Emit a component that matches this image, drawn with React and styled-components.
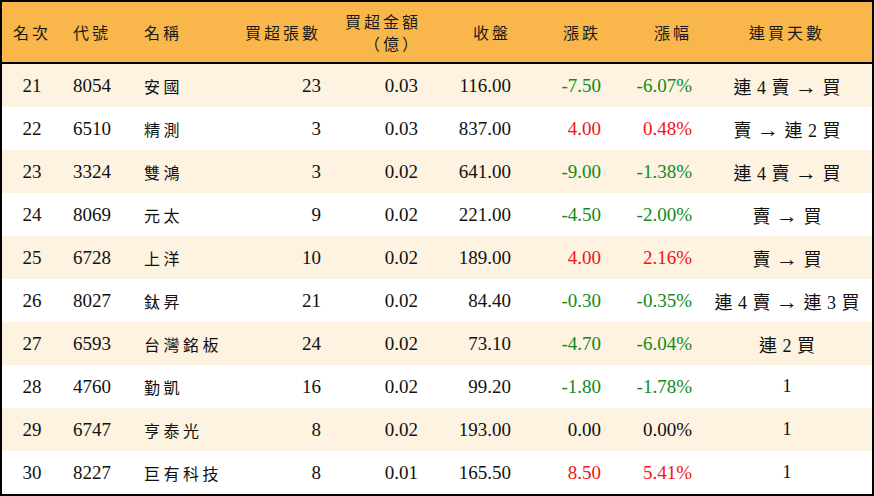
import React from 'react';
import styled, { createGlobalStyle } from 'styled-components';

const GlobalStyle = createGlobalStyle`
  html, body {
    margin: 0;
    padding: 0;
    background: #ffffff;
  }
`;

const COLS = '60px 70px 98px 101px 97px 93px 90px 91px 170px';

const Table = styled.div`
  box-sizing: border-box;
  width: 874px;
  height: 496px;
  border: 2px solid #000;
  background: #fff;
  font-family: 'Liberation Serif', 'Noto Sans CJK TC', serif;
  color: #111;
  display: flex;
  flex-direction: column;
`;

const HeadRow = styled.div`
  display: grid;
  grid-template-columns: ${COLS};
  height: 60px;
  background: #f9b74b;
  border-bottom: 2px solid #000;
`;

const HeadCell = styled.div`
  display: flex;
  flex-direction: column;
  justify-content: center;
  align-items: ${(p) => (p.$align === 'right' ? 'flex-end' : p.$align === 'center' ? 'center' : 'flex-start')};
  text-align: ${(p) => p.$align || 'left'};
  padding: ${(p) => (p.$align === 'right' ? '0 10px 0 0' : p.$align === 'center' ? '0' : `0 0 0 ${p.$indent || 11}px`)};
  font-family: 'Noto Sans CJK TC', sans-serif;
  font-size: 16px;
  line-height: 22px;
  letter-spacing: 3px;
  color: #1a1a1a;
  white-space: nowrap;
`;

const HeadLine = styled.span`
  display: block;
  margin-right: -3px;
`;

const Body = styled.div`
  display: flex;
  flex-direction: column;
  flex: 1;
`;

const Row = styled.div`
  display: grid;
  grid-template-columns: ${COLS};
  height: 43px;
  align-items: center;
  background: ${(p) => (p.$stripe ? '#fdf3e0' : '#ffffff')};
`;

const Cell = styled.div`
  font-size: 19px;
  white-space: nowrap;
  text-align: ${(p) => p.$align || 'left'};
  padding: ${(p) => (p.$align === 'right' ? '0 10px 0 0' : p.$align === 'center' ? '0' : '0 0 0 11px')};
  color: ${(p) => (p.$tone === 'up' ? '#f01414' : p.$tone === 'down' ? '#108a1a' : '#111')};
`;

const NameCell = styled(Cell)`
  font-family: 'Noto Sans CJK TC', sans-serif;
  font-size: 16px;
  letter-spacing: 3.5px;
  padding-left: 12px;
`;

const Streak = styled(Cell)`
  font-size: 18px;
  word-spacing: 1px;
`;

const Arrow = styled.span`
  font-family: 'Liberation Serif', serif;
  font-size: 22px;
  line-height: 18px;
`;

const rows = [
  ['21', '8054', '安國', '23', '0.03', '116.00', '-7.50', '-6.07%', '連 4 賣 → 買'],
  ['22', '6510', '精測', '3', '0.03', '837.00', '4.00', '0.48%', '賣 → 連 2 買'],
  ['23', '3324', '雙鴻', '3', '0.02', '641.00', '-9.00', '-1.38%', '連 4 賣 → 買'],
  ['24', '8069', '元太', '9', '0.02', '221.00', '-4.50', '-2.00%', '賣 → 買'],
  ['25', '6728', '上洋', '10', '0.02', '189.00', '4.00', '2.16%', '賣 → 買'],
  ['26', '8027', '鈦昇', '21', '0.02', '84.40', '-0.30', '-0.35%', '連 4 賣 → 連 3 買'],
  ['27', '6593', '台灣銘板', '24', '0.02', '73.10', '-4.70', '-6.04%', '連 2 買'],
  ['28', '4760', '勤凱', '16', '0.02', '99.20', '-1.80', '-1.78%', '1'],
  ['29', '6747', '亨泰光', '8', '0.02', '193.00', '0.00', '0.00%', '1'],
  ['30', '8227', '巨有科技', '8', '0.01', '165.50', '8.50', '5.41%', '1'],
];

const toneOf = (v) => (v.startsWith('-') ? 'down' : parseFloat(v) > 0 ? 'up' : undefined);

function StreakText({ text }) {
  const parts = text.split(' → ');
  if (parts.length === 1) return text;
  return (
    <>
      {parts[0]} <Arrow>→</Arrow> {parts[1]}
    </>
  );
}

export default function App() {
  return (
    <>
      <GlobalStyle />
      <Table>
        <HeadRow>
          <HeadCell $align="center">名次</HeadCell>
          <HeadCell>代號</HeadCell>
          <HeadCell $indent={12}>名稱</HeadCell>
          <HeadCell $align="right">買超張數</HeadCell>
          <HeadCell $align="right">
            <HeadLine>買超金額</HeadLine>
            <HeadLine>（億）</HeadLine>
          </HeadCell>
          <HeadCell $align="right">收盤</HeadCell>
          <HeadCell $align="right">漲跌</HeadCell>
          <HeadCell $align="right">漲幅</HeadCell>
          <HeadCell $align="center">連買天數</HeadCell>
        </HeadRow>
        <Body>
          {rows.map((r, i) => (
            <Row key={r[0]} $stripe={i % 2 === 0}>
              <Cell $align="center">{r[0]}</Cell>
              <Cell>{r[1]}</Cell>
              <NameCell>{r[2]}</NameCell>
              <Cell $align="right">{r[3]}</Cell>
              <Cell $align="right">{r[4]}</Cell>
              <Cell $align="right">{r[5]}</Cell>
              <Cell $align="right" $tone={toneOf(r[6])}>{r[6]}</Cell>
              <Cell $align="right" $tone={toneOf(r[7])}>{r[7]}</Cell>
              <Streak $align="center">
                <StreakText text={r[8]} />
              </Streak>
            </Row>
          ))}
        </Body>
      </Table>
    </>
  );
}
